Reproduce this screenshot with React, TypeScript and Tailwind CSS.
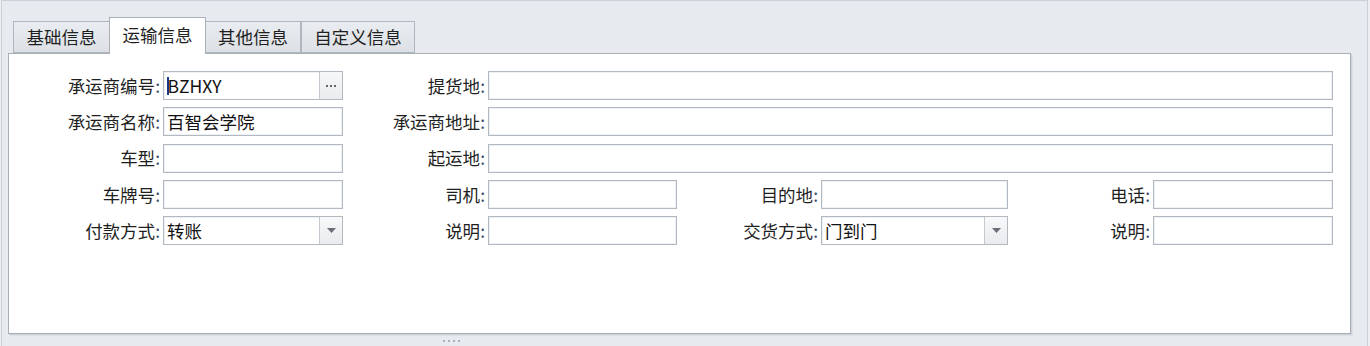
import React from "react";

const font = { fontFamily: '"Noto Sans CJK SC", "Noto Sans", sans-serif' };

function Label({ text }: { text: string }) {
  return (
    <div className="flex items-center justify-end pr-[3px] text-[17.5px] leading-none text-[#1f1f1f] whitespace-nowrap">
      {text}
      <span className="text-[#3b4a6b]">:</span>
    </div>
  );
}

function Input({ value, caret }: { value?: string; caret?: boolean }) {
  return (
    <div className="h-[29px] border border-[#b3b9c1] bg-white shadow-[inset_0_0_0_1px_#eef0f3] flex items-center pl-[3px] text-[17.5px] leading-none text-[#111] overflow-hidden">
      {caret && <span className="inline-block w-[1.5px] h-[18px] bg-[#1a3a8a] mr-[-1px]" />}
      {value}
    </div>
  );
}

function ButtonInput({ value, kind, caret }: { value?: string; kind: "ellipsis" | "drop"; caret?: boolean }) {
  return (
    <div className="h-[29px] border border-[#b3b9c1] bg-white flex items-stretch text-[17.5px] leading-none text-[#111]">
      <div className="flex-1 flex items-center pl-[3px] shadow-[inset_1px_1px_0_#eef0f3]">
        {caret && <span className="inline-block w-[1.5px] h-[18px] bg-[#1a3a8a] mr-[-1px]" />}
        {value}
      </div>
      <div className="w-[23px] border-l border-[#c4c9cf] bg-gradient-to-b from-[#f7f8f9] to-[#e9ebee] flex items-center justify-center">
        {kind === "ellipsis" ? (
          <svg width="12" height="4" viewBox="0 0 12 4">
            <rect x="1" y="1" width="2" height="2" fill="#666" />
            <rect x="5" y="1" width="2" height="2" fill="#666" />
            <rect x="9" y="1" width="2" height="2" fill="#666" />
          </svg>
        ) : (
          <svg width="9" height="5" viewBox="0 0 9 5">
            <polygon points="0,0 9,0 4.5,5" fill="#6b6f75" />
          </svg>
        )}
      </div>
    </div>
  );
}

export default function App() {
  const tabs = ["基础信息", "运输信息", "其他信息", "自定义信息"];
  return (
    <div className="w-[1370px] h-[346px] bg-[#eceef2] overflow-hidden" style={font}>
      <div className="ml-[1px] w-[1367px] h-[346px] bg-[#e7eaee] border-l border-r border-t border-[#cdd1d7] flex flex-col">
        {/* tabs */}
        <div className="flex items-end pl-[11px] pt-[16px] h-[52px]">
          {tabs.map((t, i) =>
            i === 1 ? (
              <div
                key={t}
                className="relative z-10 h-[37px] -mb-px border border-b-0 border-[#aab0b8] bg-white flex items-center justify-center w-[97px] text-[17.5px] leading-none text-[#1f1f1f] pb-[2px]"
              >
                {t}
              </div>
            ) : (
              <div
                key={t}
                className={`h-[32px] border border-[#b0b6be] bg-gradient-to-b from-[#e9ecf0] to-[#dde1e6] flex items-center justify-center text-[17.5px] leading-none text-[#1f1f1f] ${
                  i === 0 ? "w-[96px] border-r-0" : i === 2 ? "w-[95px] border-l-0" : "w-[114px] border-l-[#b0b6be]"
                }`}
              >
                {t}
              </div>
            )
          )}
        </div>
        {/* panel */}
        <div className="ml-[6px] w-[1343px] h-[281px] bg-white border border-[#a9afb7] shadow-[1px_1px_0_#cdd2d8,2px_2px_0_#dde1e6] pt-[17px]">
          <div className="grid grid-cols-[154px_180px_145px_189px_144px_187px_145px_180px] grid-rows-[29px_29px_29px_29px_29px] gap-y-[7.3px]">
            <Label text="承运商编号" />
            <ButtonInput value="BZHXY" kind="ellipsis" caret />
            <Label text="提货地" />
            <div className="col-span-5">
              <Input />
            </div>

            <Label text="承运商名称" />
            <Input value="百智会学院" />
            <Label text="承运商地址" />
            <div className="col-span-5">
              <Input />
            </div>

            <Label text="车型" />
            <Input />
            <Label text="起运地" />
            <div className="col-span-5">
              <Input />
            </div>

            <Label text="车牌号" />
            <Input />
            <Label text="司机" />
            <Input />
            <Label text="目的地" />
            <Input />
            <Label text="电话" />
            <Input />

            <Label text="付款方式" />
            <ButtonInput value="转账" kind="drop" />
            <Label text="说明" />
            <Input />
            <Label text="交货方式" />
            <ButtonInput value="门到门" kind="drop" />
            <Label text="说明" />
            <Input />
          </div>
        </div>
        {/* resize grip */}
        <div className="flex gap-[3px] pl-[441px] pt-[6px]">
          <span className="w-[2px] h-[2px] bg-[#a9b0ba]" />
          <span className="w-[2px] h-[2px] bg-[#a9b0ba]" />
          <span className="w-[2px] h-[2px] bg-[#a9b0ba]" />
          <span className="w-[2px] h-[2px] bg-[#a9b0ba]" />
        </div>
      </div>
    </div>
  );
}
